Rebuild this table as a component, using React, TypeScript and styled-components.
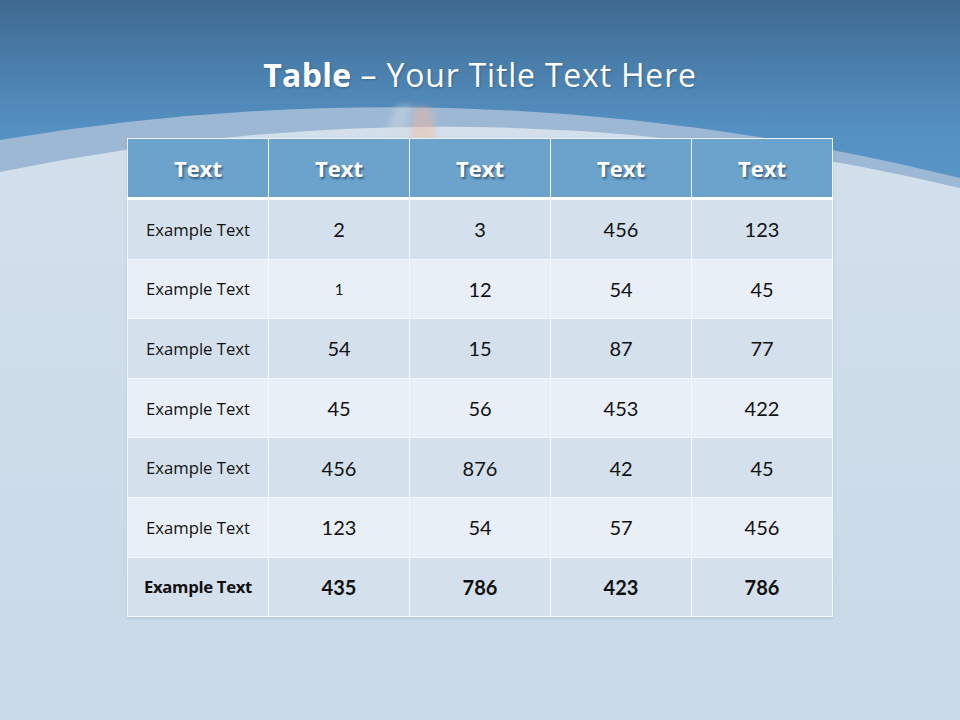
import React from 'react'
import styled, { createGlobalStyle } from 'styled-components'

const GlobalStyle = createGlobalStyle`
  html, body {
    margin: 0;
    padding: 0;
  }
  body {
    font-family: 'Open Sans', Lato, sans-serif;
  }
`

const Slide = styled.div`
  position: relative;
  width: 960px;
  height: 720px;
  overflow: hidden;
  background: linear-gradient(180deg, #3f6990 0%, #4a7eab 9%, #5590c3 18%, #5a95c6 26%);
`

const Backdrop = styled.svg`
  position: absolute;
  left: 0;
  top: 0;
  z-index: 0;
`

const Content = styled.div`
  position: relative;
  z-index: 1;
  display: flex;
  flex-direction: column;
  align-items: center;
  padding-top: 53px;
`

const Title = styled.h1`
  margin: 0;
  height: 44px;
  font-family: 'Open Sans', sans-serif;
  font-size: 32px;
  font-weight: 400;
  line-height: 44px;
  letter-spacing: 0.8px;
  color: #ffffff;
  text-shadow: 1px 1px 2px rgba(20, 50, 80, 0.35);

  & b {
    font-weight: 700;
    letter-spacing: 0.3px;
  }
`

const Table = styled.table`
  margin-top: 41px;
  width: 706px;
  border-collapse: collapse;
  table-layout: fixed;
  border: 1px solid #f4f8fb;
  box-shadow: 0 1px 3px rgba(60, 90, 120, 0.18);
`

const HeadCell = styled.th`
  height: 58px;
  padding: 0;
  background: #6ba3cd;
  border: 1px solid #eef4f9;
  border-bottom: 3px solid #ffffff;
  color: #ffffff;
  font-family: 'Open Sans', sans-serif;
  font-size: 22px;
  font-weight: 700;
  text-align: center;
  text-shadow: 1.5px 1.5px 2px rgba(20, 40, 70, 0.55);
`

const Row = styled.tr<{ $light: boolean }>`
  background: ${(p) => (p.$light ? '#e9eff6' : '#d4e0ec')};
`

const Cell = styled.td<{ $label?: boolean; $bold?: boolean; $small?: boolean }>`
  height: 58.6px;
  padding: 0;
  border: 1px solid #f5f8fb;
  text-align: center;
  vertical-align: middle;
  color: #111111;
  font-family: ${(p) => (p.$label ? "'Open Sans', sans-serif" : 'Lato, sans-serif')};
  font-size: ${(p) => (p.$label ? '16.7px' : p.$small ? '15px' : '20px')};
  letter-spacing: ${(p) => (p.$label && p.$bold ? '-0.3px' : '0')};
  font-weight: ${(p) => (p.$bold ? 700 : 400)};
`

const headers = ['Text', 'Text', 'Text', 'Text', 'Text']

const rows = [
  ['2', '3', '456', '123'],
  ['1', '12', '54', '45'],
  ['54', '15', '87', '77'],
  ['45', '56', '453', '422'],
  ['456', '876', '42', '45'],
  ['123', '54', '57', '456'],
  ['435', '786', '423', '786'],
]

const App = () => {
  return (
    <Slide>
      <GlobalStyle />
      <Backdrop width='960' height='720' viewBox='0 0 960 720'>
        <defs>
          <linearGradient id='floor' x1='0' y1='0' x2='0' y2='1'>
            <stop offset='0' stopColor='#d3e0ec' />
            <stop offset='1' stopColor='#c8d9e8' />
          </linearGradient>
          <filter id='soft' x='-50%' y='-50%' width='200%' height='200%'>
            <feGaussianBlur stdDeviation='3' />
          </filter>
        </defs>
        <path d='M0,140 Q480,59 960,178 L960,720 L0,720 Z' fill='#9db8d4' />
        <path d='M0,172 Q480,74 960,188 L960,720 L0,720 Z' fill='url(#floor)' />
        {/* faint figure showing through the horizon */}
        <g filter='url(#soft)' opacity='0.45'>
          <path d='M396,106 L412,104 L404,140 L384,138 Z' fill='#d2dae4' />
          <path d='M414,106 L432,108 L436,140 L410,140 Z' fill='#f3b89e' />
        </g>
      </Backdrop>
      <Content>
        <Title>
          <b>Table</b> – Your Title Text Here
        </Title>
        <Table>
          <thead>
            <tr>
              {headers.map((h, i) => (
                <HeadCell key={i}>{h}</HeadCell>
              ))}
            </tr>
          </thead>
          <tbody>
            {rows.map((r, i) => {
              const bold = i === rows.length - 1
              return (
                <Row key={i} $light={i % 2 === 1}>
                  <Cell $label $bold={bold}>Example Text</Cell>
                  {r.map((v, j) => (
                    <Cell key={j} $bold={bold} $small={i === 1 && j === 0}>
                      {v}
                    </Cell>
                  ))}
                </Row>
              )
            })}
          </tbody>
        </Table>
      </Content>
    </Slide>
  )
}

export default App
